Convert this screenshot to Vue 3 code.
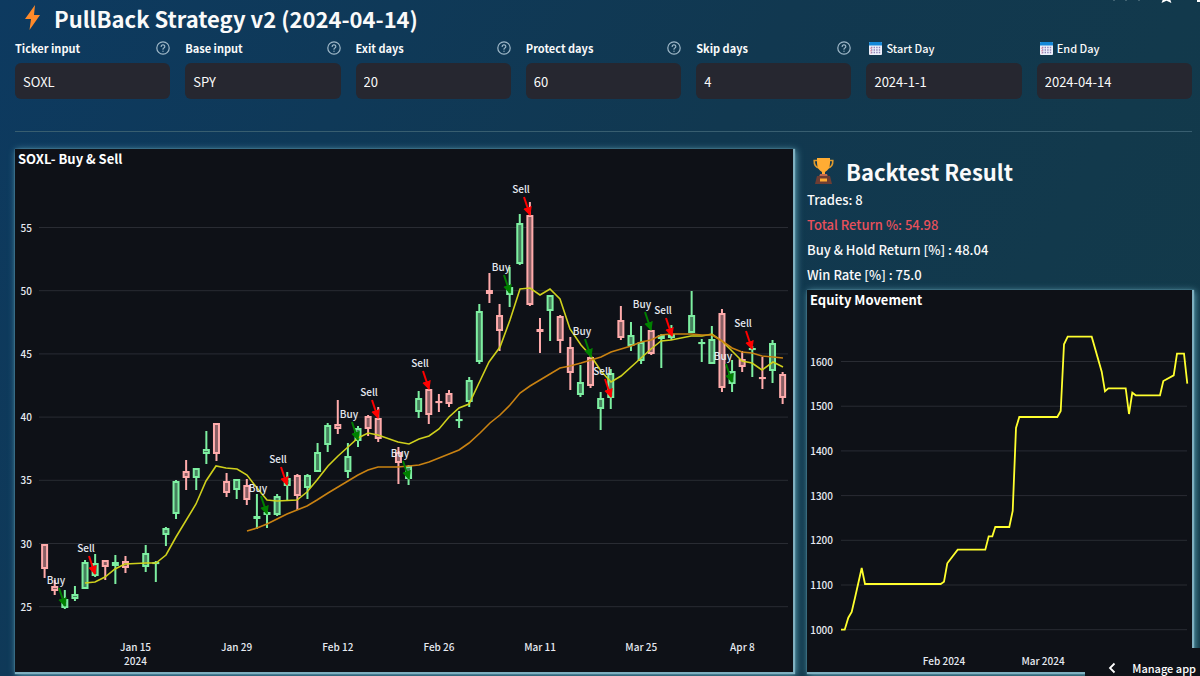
<script setup>
const fields = [
  { id: 'ticker', label: 'Ticker input', value: 'SOXL', help: true },
  { id: 'base', label: 'Base input', value: 'SPY', help: true },
  { id: 'exit', label: 'Exit days', value: '20', help: true },
  { id: 'protect', label: 'Protect days', value: '60', help: true },
  { id: 'skip', label: 'Skip days', value: '4', help: true },
  { id: 'start', label: 'Start Day', value: '2024-1-1', calendar: true },
  { id: 'end', label: 'End Day', value: '2024-04-14', calendar: true },
]

const priceTicks = [55, 50, 45, 40, 35, 30, 25].map((v, i) => ({ v, y: 227.5 + i * 63.2 }))
const dateTicks = ['Jan 15', 'Jan 29', 'Feb 12', 'Feb 26', 'Mar 11', 'Mar 25', 'Apr 8'].map((t, i) => ({
  t,
  x: 135.5 + i * 101.15,
}))

// weekday index, high, body top, body bottom, low, direction (1 = up, 0 = down)
const candles = [
  [0, 544, 544, 569, 578, 0], [1, 580, 586, 591, 595, 0], [2, 590, 599, 608, 609, 1], [3, 586, 594, 599, 601, 1],
  [4, 560, 562, 589, 589, 1], [5, 554, 563, 576, 577, 1], [6, 560, 560, 567, 580, 0], [7, 555, 562, 566, 584, 1],
  [8, 556, 561, 568, 573, 0], [10, 545, 553, 567, 572, 1], [11, 561, 562, 564, 582, 1], [12, 527, 528, 535, 546, 1],
  [13, 480, 481, 514, 519, 1], [14, 460, 471, 478, 490, 0], [15, 468, 468, 478, 490, 1], [16, 431, 449, 454, 464, 1],
  [17, 423, 423, 454, 461, 0], [18, 473, 481, 493, 497, 0], [19, 479, 479, 490, 499, 1], [20, 479, 485, 500, 505, 0],
  [21, 494, 516, 519, 529, 1], [22, 511, 512, 515, 528, 1], [23, 494, 496, 515, 516, 1], [24, 472, 478, 486, 500, 1],
  [25, 474, 475, 496, 510, 0], [26, 474, 475, 488, 499, 1], [27, 443, 452, 472, 472, 1], [28, 423, 425, 445, 452, 1],
  [29, 400, 424, 429, 434, 0], [30, 443, 456, 472, 478, 1], [31, 426, 428, 441, 447, 1], [32, 415, 416, 429, 436, 0],
  [33, 407, 418, 439, 442, 0], [35, 447, 452, 463, 484, 0], [36, 465, 466, 479, 485, 1], [37, 391, 398, 412, 418, 1],
  [38, 389, 389, 415, 424, 0], [39, 394, 401, 402, 412, 0], [40, 390, 393, 404, 407, 0], [41, 411, 419, 421, 428, 1],
  [42, 377, 380, 402, 407, 1], [43, 304, 311, 362, 364, 1], [44, 273, 290, 294, 303, 0], [45, 304, 315, 331, 351, 0],
  [46, 267, 287, 295, 307, 1], [47, 214, 223, 264, 265, 1], [48, 202, 215, 305, 306, 0], [49, 318, 329, 332, 353, 0],
  [50, 295, 295, 311, 341, 1], [51, 315, 316, 341, 353, 0], [52, 337, 347, 373, 390, 0], [53, 365, 382, 395, 397, 1],
  [54, 356, 357, 386, 388, 0], [55, 392, 398, 409, 430, 1], [56, 369, 373, 398, 409, 1], [57, 306, 320, 338, 340, 0],
  [58, 322, 335, 346, 351, 1], [59, 326, 342, 361, 364, 1], [60, 330, 330, 354, 355, 0], [61, 334, 335, 339, 368, 1],
  [62, 325, 334, 338, 340, 1], [64, 291, 315, 333, 333, 1], [65, 339, 342, 344, 362, 1], [66, 326, 339, 364, 364, 1],
  [67, 309, 313, 388, 392, 0], [68, 360, 371, 384, 392, 1], [69, 351, 359, 367, 372, 0], [70, 346, 348, 350, 377, 1],
  [71, 357, 377, 378, 389, 0], [72, 340, 343, 371, 383, 1], [73, 372, 374, 398, 404, 0],
].map(([i, high, top, bottom, low, up]) => ({ x: 44.6 + i * 10.11, high, top, bottom, low, up }))

const fastAverage =
  '85,583 95,582 105,577 115,569 125,564 146,563 156,563 166,555 176,537 196,504 206,481 216,466 226,468 237,469 247,475 257,488 267,500 277,501 297,500 307,492 317,480 328,466 338,456 348,447 358,438 368,433 378,435 398,442 409,444 419,439 429,436 439,429 449,417 459,408 469,404 479,383 489,362 500,347 510,320 520,289 530,288 540,295 550,289 560,299 570,329 581,345 591,356 601,371 611,382 621,376 641,358 651,349 661,341 671,340 691,336 702,336 712,334 722,341 732,351 742,361 752,363 762,370 773,362 783,367'
const slowAverage =
  '247,531 257,528 267,524 277,519 287,514 297,510 307,506 317,500 328,493 338,487 348,481 358,475 368,470 378,467 398,467 409,466 419,465 429,462 439,458 449,454 459,450 469,443 480,433 490,423 500,415 510,405 520,393 530,386 540,380 550,374 560,368 570,366 581,363 591,360 601,357 611,352 621,349 631,346 641,342 651,340 661,335 671,334 691,334 702,335 712,335 722,341 732,348 742,352 752,353 762,356 773,357 783,358'

const signals = [
  ['Buy', 65, 606], ['Sell', 95, 574], ['Buy', 267, 514], ['Sell', 287, 485], ['Buy', 358, 440], ['Sell', 378, 418],
  ['Buy', 409, 479], ['Sell', 429, 389], ['Buy', 510, 293], ['Sell', 530, 215], ['Buy', 591, 357], ['Sell', 611, 397],
  ['Buy', 651, 330], ['Sell', 672, 336], ['Buy', 732, 382], ['Sell', 752, 349],
].map(([kind, x, y]) => ({ kind, x, y }))

const equityTicks = [1600, 1500, 1400, 1300, 1200, 1100, 1000].map((v, i) => ({ v, y: 361.5 + i * 44.7 }))
const equity =
  '841,629.7 844.7,629.7 848.3,617.7 851.7,612 855,597.7 861.7,568 865,584 940.7,584 944,581.7 947.3,563.3 957.7,549.7 985.3,549.7 988.7,536.3 992.3,536.3 995.3,527 1009.3,527 1012.7,511 1016,428 1019.3,417 1057.3,417 1060.7,411 1064,344.3 1067.7,336.7 1091.7,336.7 1101.7,371.7 1105,391.3 1108.3,388.3 1125.7,388.3 1129,414 1132.3,392.7 1135.7,395.3 1160,395.3 1163.3,381 1173.7,375.3 1177,353.7 1184,353.7 1187.3,383.7'
</script>

<template>
  <main class="page">
    <div class="toolbar" aria-hidden="true">
      <svg width="90" height="6" viewBox="0 0 90 6">
        <g fill="none" stroke="#9bb3be" stroke-width="1">
          <path d="M1 -1q3 2 6 0M13 -1q3 2 6 0M26 -1q3 2 6 0" />
        </g>
        <path d="M52 -4H61L60 -1 61.500 3 56.500 .8 51.500 3 53 -1Z" fill="#fff" />
        <rect x="87" y="-4" width="8" height="6" fill="#fff" />
      </svg>
    </div>

    <h1 class="title">
      <svg class="bolt" width="16" height="26" viewBox="0 0 16 26" aria-hidden="true">
        <path d="M10 0 0 14h6L4.500 25 15 10H9Z" fill="#ff8a2a" />
      </svg>
      <span>PullBack Strategy v2 (2024-04-14)</span>
    </h1>

    <form class="fields">
      <div v-for="f in fields" :key="f.id" class="field">
        <div class="field-head">
          <svg v-if="f.calendar" class="calendar" width="13" height="13" viewBox="0 0 13 13" aria-hidden="true">
            <rect width="13" height="13" rx="1" fill="#eef0fa" />
            <path d="M0 3.500V1a1 1 0 0 1 1-1h11a1 1 0 0 1 1 1v2.500Z" fill="#1488d8" />
            <path d="M2 5.500h10M2 8h10M2 10.500h10" stroke="#8d83b8" stroke-width="1.400" stroke-dasharray="1.400 1.200" />
            <path d="M2 5.500v6" stroke="#e58a9c" stroke-width="1.200" stroke-dasharray="1.400 1.100" />
          </svg>
          <label :for="f.id" :class="{ light: f.calendar }">{{ f.label }}</label>
          <button v-if="f.help" type="button" class="help" :aria-label="'Help for ' + f.label">
            <svg width="14" height="14" viewBox="0 0 14 14">
              <g fill="none" stroke="#9fb8c8" stroke-width="1.200" stroke-linecap="round">
                <circle cx="7" cy="7" r="6.200" />
                <path d="M5.200 5.500a1.800 1.700 0 1 1 2.700 1.500c-.6.350-.9.600-.9 1.200" />
                <path d="M7 10.200v.1" />
              </g>
            </svg>
          </button>
        </div>
        <input :id="f.id" type="text" :value="f.value" />
      </div>
    </form>

    <hr />

    <div class="columns">
      <section class="panel">
        <svg class="chart" viewBox="15 149 778 523" role="img" aria-label="SOXL- Buy &amp; Sell">
          <defs>
            <marker id="tip-Buy" viewBox="0 0 9 9" refX="8" refY="4.500" markerWidth="9" markerHeight="9" markerUnits="userSpaceOnUse" orient="auto">
              <path d="M0 0 9 4.500 0 9Z" fill="#008000" />
            </marker>
            <marker id="tip-Sell" viewBox="0 0 9 9" refX="8" refY="4.500" markerWidth="9" markerHeight="9" markerUnits="userSpaceOnUse" orient="auto">
              <path d="M0 0 9 4.500 0 9Z" fill="#ff0000" />
            </marker>
          </defs>
          <text class="chart-title" x="18" y="164">SOXL- Buy &amp; Sell</text>
          <g v-for="t in priceTicks" :key="t.v">
            <line class="grid" x1="39" x2="788" :y1="t.y" :y2="t.y" />
            <text class="tick" x="32" :y="t.y + 4" text-anchor="end">{{ t.v }}</text>
          </g>
          <text v-for="t in dateTicks" :key="t.t" class="tick" :x="t.x" y="651" text-anchor="middle">{{ t.t }}</text>
          <text class="tick" x="135.500" y="665" text-anchor="middle">2024</text>
          <g v-for="c in candles" :key="c.x" :class="c.up ? 'up' : 'down'">
            <path :d="`M${c.x} ${c.high}V${c.top}M${c.x} ${c.bottom}V${c.low}`" />
            <rect :x="c.x - 2.5" :y="c.top + 1" width="5" :height="Math.max(c.bottom - c.top - 2, 0.1)" />
          </g>
          <polyline class="fast" :points="fastAverage" />
          <polyline class="slow" :points="slowAverage" />
          <g v-for="s in signals" :key="s.x">
            <line
              :class="'arrow-' + s.kind"
              :x1="s.x - 6"
              :y1="s.y - 18"
              :x2="s.x"
              :y2="s.y"
              :marker-end="`url(#tip-${s.kind})`"
            />
            <text class="tick" :x="s.x - 9" :y="s.y - 22" text-anchor="middle">{{ s.kind }}</text>
          </g>
        </svg>
      </section>

      <section class="result">
        <h2>
          <svg width="21" height="26" viewBox="0 0 21 26" aria-hidden="true">
            <path d="M5 2.500H1.200C1 7 3 9.500 6.500 10M16 2.500h3.800C20 7 18 9.500 14.500 10" fill="none" stroke="#e09a2c" stroke-width="1.600" />
            <path d="M4 0h13v5c0 4.500-2 7.500-5 9v4H9v-4C6 12.500 4 9.500 4 5Z" fill="#ffac33" />
            <path d="M7 16h7l1 3H6Z" fill="#c1694f" />
            <path d="M4 18h13l2 8H2Z" fill="#6e3d33" />
            <rect x="7" y="20.500" width="7" height="3" fill="#ffac33" />
          </svg>
          <span>Backtest Result</span>
        </h2>
        <p>Trades: 8</p>
        <p class="total">Total Return %: 54.98</p>
        <p>Buy &amp; Hold Return [%] : 48.04</p>
        <p>Win Rate [%] : 75.0</p>
        <div class="panel">
          <svg class="chart" viewBox="807 290 385 382" role="img" aria-label="Equity Movement">
            <text class="chart-title" x="810" y="305">Equity Movement</text>
            <g v-for="t in equityTicks" :key="t.v">
              <line class="grid" x1="841" x2="1187" :y1="t.y" :y2="t.y" />
              <text class="tick" x="833" :y="t.y + 4" text-anchor="end">{{ t.v }}</text>
            </g>
            <text class="tick" x="944" y="665" text-anchor="middle">Feb 2024</text>
            <text class="tick" x="1043" y="665" text-anchor="middle">Mar 2024</text>
            <polyline class="equity" :points="equity" />
          </svg>
        </div>
      </section>
    </div>

    <button type="button" class="manage">
      <svg width="8" height="12" viewBox="0 0 8 12" aria-hidden="true">
        <path d="M6.500 1.500 2 6l4.500 4.500" fill="none" stroke="#fff" stroke-width="1.800" />
      </svg>
      <span>Manage app</span>
    </button>
  </main>
</template>

<style>
html {
  background: #0e1117;
}
body {
  margin: 0;
  overflow: hidden;
}
</style>

<style scoped>
.page {
  position: relative;
  box-sizing: border-box;
  min-height: 100vh;
  padding: 3px 8px 4px 15px;
  background: linear-gradient(120deg, #0d3a60 0%, #113850 50%, #133a48 100%);
  color: #fafafa;
  font-family: "Noto Sans CJK JP", "Noto Sans", sans-serif;
}
.toolbar {
  position: absolute;
  top: 0;
  right: 0;
}
.toolbar svg {
  display: block;
}
h1,
h2,
p {
  margin: 0;
}
.title {
  display: flex;
  align-items: center;
  gap: 13px;
  height: 30px;
  padding-left: 10px;
  font-size: 22px;
  line-height: 30px;
  font-weight: 700;
}
.fields {
  display: grid;
  grid-template-columns: repeat(7, 1fr);
  gap: 15px;
  margin-top: 6px;
}
.field {
  min-width: 0;
}
.field-head {
  display: flex;
  align-items: center;
  height: 18px;
  margin-bottom: 6px;
  font-size: 11px;
  line-height: 18px;
}
.field-head label {
  font-weight: 700;
}
.field-head label.light {
  font-weight: 500;
}
.calendar {
  margin: 0 4px 0 3px;
}
.help {
  display: flex;
  margin-left: auto;
  padding: 0;
  border: 0;
  background: none;
}
.field input {
  display: block;
  box-sizing: border-box;
  width: 100%;
  height: 36px;
  padding: 0 8px;
  border: 0;
  border-radius: 6px;
  background: #262730;
  color: #fafafa;
  font: 13px/20px "Noto Sans CJK JP", "Noto Sans", sans-serif;
}
hr {
  height: 1px;
  margin: 32px 0 17px;
  border: 0;
  background: #385e70;
}
.columns {
  display: grid;
  grid-template-columns: 778fr 385fr;
  gap: 14px;
  align-items: start;
}
.panel {
  background: #0e1117;
  box-shadow: 1px 1px 1px 1px #7fb0c0, 2px 2px 7px 1px #5fa3b5;
}
.chart {
  display: block;
  width: 100%;
}
.result h2 {
  display: flex;
  align-items: center;
  gap: 12px;
  height: 38px;
  box-sizing: content-box;
  padding: 3px 0 0 6px;
  font-size: 22px;
  line-height: 30px;
  font-weight: 700;
}
.result p {
  height: 25px;
  font-size: 13px;
  line-height: 20px;
  font-weight: 500;
}
.result .total {
  color: #e8505b;
}
.chart-title {
  fill: #fff;
  font-size: 13px;
  font-weight: 700;
}
.tick {
  fill: #e6eaf1;
  font-size: 10px;
  font-weight: 500;
}
.grid {
  stroke: #292c33;
}
.up,
.down {
  stroke-width: 2;
}
.up {
  stroke: #7defa1;
  fill: #46815e;
}
.down {
  stroke: #ffabab;
  fill: #895f64;
}
.fast,
.slow,
.equity {
  fill: none;
}
.fast,
.slow {
  stroke-width: 1.600;
}
.fast {
  stroke: #cfd01c;
}
.slow {
  stroke: #c98212;
}
.equity {
  stroke: #ffff2e;
  stroke-width: 1.800;
}
.arrow-Buy,
.arrow-Sell {
  stroke-width: 2;
}
.arrow-Buy {
  stroke: #008000;
}
.arrow-Sell {
  stroke: #ff0000;
}
.manage {
  position: absolute;
  right: 0;
  bottom: 0;
  display: flex;
  align-items: center;
  justify-content: flex-end;
  gap: 16px;
  width: 115px;
  height: 28px;
  padding: 12px 4px 0 0;
  border: 0;
  background: #0e1117;
  color: #fff;
  font: 500 11px/16px "Noto Sans CJK JP", "Noto Sans", sans-serif;
}
</style>
